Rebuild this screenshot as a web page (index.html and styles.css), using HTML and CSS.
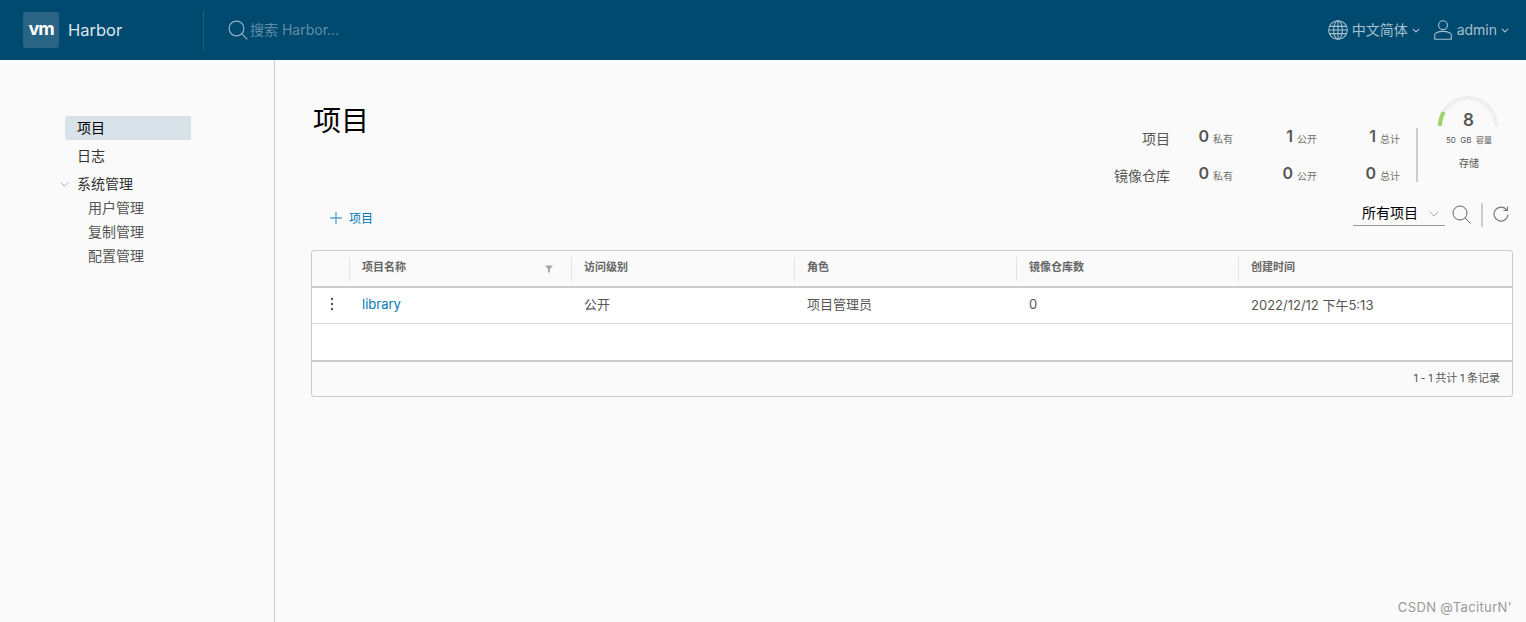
FILE: index.html
```html
<!DOCTYPE html>
<html lang="zh-CN">
<head>
    <meta charset="UTF-8">
    <title>Harbor</title>
    <link rel="stylesheet" href="styles.css">
</head>
<body>
<header class="topbar">
    <div class="brand">
        <span class="brand-logo">vm</span>
        <span class="brand-name">Harbor</span>
    </div>
    <div class="global-search">
        <svg class="search-icon" viewBox="0 0 20 20" width="20" height="20">
            <circle cx="8.5" cy="8.5" r="7.4"/>
            <path d="M13.9 13.9l5.4 5.4"/>
        </svg>
        <span class="search-hint">搜索 Harbor...</span>
    </div>
    <div class="topbar-right">
        <div class="top-menu lang-menu">
            <svg class="top-icon" viewBox="0 0 20 20" width="20" height="20">
                <circle cx="10" cy="10" r="9.3"/>
                <ellipse cx="10" cy="10" rx="4.4" ry="9.3"/>
                <path d="M10 .7v18.6M1.6 6.4h16.8M.7 10h18.6M1.6 13.6h16.8"/>
            </svg>
            <span class="top-label">中文简体</span>
            <svg class="caret" viewBox="0 0 8 5" width="8" height="5"><path d="M.8.8L4 4l3.2-3.2"/></svg>
        </div>
        <div class="top-menu user-menu">
            <svg class="top-icon" viewBox="0 0 18 20" width="18" height="20">
                <circle cx="9" cy="5.2" r="4.4"/>
                <path d="M.7 19.3v-4c0-1.2.6-2.1 1.7-2.6 2-.9 4.2-1.3 6.6-1.3s4.600.4 6.600 1.300c1.100.5 1.700 1.400 1.700 2.600v4z"/>
            </svg>
            <span class="top-label">admin</span>
            <svg class="caret" viewBox="0 0 8 5" width="8" height="5"><path d="M.8.8L4 4l3.2-3.2"/></svg>
        </div>
    </div>
</header>

<div class="layout">
    <nav class="sidenav">
        <a class="nav-item active">项目</a>
        <a class="nav-item logs">日志</a>
        <a class="nav-item group">
            <svg class="group-caret" viewBox="0 0 10 6" width="9" height="5"><path d="M.6.6L5 5 9.400.6"/></svg>
            系统管理
        </a>
        <a class="nav-child">用户管理</a>
        <a class="nav-child">复制管理</a>
        <a class="nav-child">配置管理</a>
    </nav>

    <main class="content">
        <div class="page-head">
            <h1 class="page-title">项目</h1>
            <div class="summary">
                <div class="stats">
                    <div class="stat-name">项目</div>
                    <div class="stat"><b>0</b><small>私有</small></div>
                    <div class="stat"><b>1</b><small>公开</small></div>
                    <div class="stat"><b>1</b><small>总计</small></div>
                    <div class="stat-name">镜像仓库</div>
                    <div class="stat"><b>0</b><small>私有</small></div>
                    <div class="stat"><b>0</b><small>公开</small></div>
                    <div class="stat"><b>0</b><small>总计</small></div>
                </div>
                <div class="storage">
                    <div class="gauge">
                        <svg viewBox="0 0 60 30" width="60" height="30">
                            <path class="gauge-track" d="M2 30a28 28 0 0 1 56 0"/>
                            <path class="gauge-fill" d="M2 30a28 28 0 0 1 3.800-14"/>
                        </svg>
                        <span class="gauge-value">8</span>
                    </div>
                    <div class="storage-cap">50&nbsp; GB &nbsp;容量</div>
                    <div class="storage-name">存储</div>
                </div>
            </div>
        </div>

        <div class="toolbar">
            <button class="add-btn">
                <svg viewBox="0 0 12 12" width="12" height="12"><path d="M6 0v12M0 6h12"/></svg>
                <span class="add-label">项目</span>
            </button>
            <div class="tools">
                <div class="filter-select">
                    <span class="select-label">所有项目</span>
                    <svg viewBox="0 0 10 6" width="10" height="6"><path d="M.6.6L5 5 9.400.6"/></svg>
                </div>
                <svg class="tool-search" viewBox="0 0 19 19" width="19" height="19">
                    <circle cx="8" cy="8" r="7"/>
                    <path d="M13 13l5.400 5.400"/>
                </svg>
                <span class="tool-sep"></span>
                <svg class="tool-refresh" viewBox="0 0 16 16" width="16" height="16">
                    <path d="M13.700 4A7 7 0 1 0 15 8.500"/>
                    <path d="M14.500 .5v4h-4"/>
                </svg>
            </div>
        </div>

        <div class="datagrid">
            <div class="grid-row grid-head">
                <div class="cell action-cell"></div>
                <div class="cell filter-cell">项目名称
                    <svg viewBox="0 0 10 9" width="8" height="8"><path d="M0 0h10L6.200 4.500V9H3.800V4.500z"/></svg>
                </div>
                <div class="cell">访问级别</div>
                <div class="cell">角色</div>
                <div class="cell">镜像仓库数</div>
                <div class="cell">创建时间</div>
            </div>
            <div class="grid-row grid-body">
                <div class="cell action-cell">
                    <svg viewBox="0 0 4 14" width="4" height="14"><circle cx="2" cy="2" r="1.200"/><circle cx="2" cy="7" r="1.200"/><circle cx="2" cy="12" r="1.200"/></svg>
                </div>
                <div class="cell"><a class="project-link">library</a></div>
                <div class="cell cjk">公开</div>
                <div class="cell cjk">项目管理员</div>
                <div class="cell">0</div>
                <div class="cell">2022/12/12 下午5:13</div>
            </div>
            <div class="grid-empty"></div>
            <div class="grid-foot">1 - 1 共计 1 条记录</div>
        </div>
    </main>
</div>
<div class="watermark">CSDN @TaciturN'</div>
</body>
</html>
```

FILE: styles.css
```css
*{
    margin: 0;
    padding: 0;
    box-sizing: border-box;
}
html,body{
    height: 100%;
    overflow: hidden;
}
body{
    background: #fafafa;
    color: #565656;
    font-family: "Inter", "Noto Sans CJK SC", sans-serif;
    font-size: 13px;
}
svg{
    display: block;
    fill: none;
    stroke: currentColor;
    flex: none;
}

/* top bar */
.topbar{
    height: 60px;
    background: #004a70;
    display: flex;
    align-items: center;
    color: #fff;
}
.brand{
    width: 204px;
    height: 40px;
    padding-left: 23px;
    display: flex;
    align-items: center;
    border-right: 1px solid #1d5f81;
}
.brand-logo{
    width: 36px;
    height: 36px;
    border-radius: 3px;
    background: #2a6484;
    color: #fff;
    font-size: 18px;
    font-weight: 700;
    letter-spacing: -1px;
    line-height: 33px;
    text-align: center;
}
.brand-name{
    margin-left: 9px;
    font-size: 16.500px;
    color: #dce7ed;
}
.global-search{
    display: flex;
    align-items: center;
    margin-left: 24px;
    color: #8fb0c2;
}
.search-icon{
    stroke-width: 1.200;
}
.search-hint{
    margin-left: 2px;
    padding-bottom: 2px;
    font-size: 14px;
    color: #5f8ea7;
}
.topbar-right{
    margin-left: auto;
    display: flex;
    align-items: center;
    padding-right: 17px;
}
.top-menu{
    display: flex;
    align-items: center;
    font-size: 14px;
    color: #a5c0ce;
}
.top-label{
    padding-bottom: 2px;
}
.user-menu{
    margin-left: 14px;
}
.top-icon{
    stroke-width: 1.100;
    margin-right: 4px;
}
.user-menu .top-icon{
    margin-right: 5px;
}
.caret{
    margin-left: 4px;
    stroke-width: 1.100;
}

/* side nav */
.layout{
    display: flex;
    height: 562px;
}
.sidenav{
    width: 275px;
    flex: none;
    border-right: 1px solid #ccc;
    padding: 56px 0 0 65px;
    display: flex;
    flex-direction: column;
    font-size: 14px;
    color: #333;
}
.nav-item{
    position: relative;
    width: 126px;
    height: 24px;
    line-height: 23px;
    padding-left: 12px;
    border-radius: 3px 0 0 3px;
}
.nav-item.active{
    background: #d8e3e9;
    color: #000;
}
.logs{
    margin-top: 4px;
}
.group{
    margin-top: 4px;
}
.group-caret{
    position: absolute;
    left: -5px;
    top: 10px;
    color: #999;
}
.nav-child{
    height: 24px;
    line-height: 23px;
    padding-left: 23px;
    color: #565656;
}

/* main */
.content{
    flex: 1;
    min-width: 0;
    padding: 36px 13px 0 36px;
}
.page-head{
    height: 106px;
    display: flex;
    justify-content: space-between;
    align-items: flex-start;
}
.page-title{
    margin: 6px 0 0 2px;
    font-size: 28px;
    font-weight: 400;
    line-height: 38px;
    color: #000;
}
.summary{
    display: flex;
    align-items: flex-start;
}
.stats{
    display: grid;
    grid-template-columns: 70px 63px 84px 83px;
    grid-auto-rows: 37px;
    margin-top: 24px;
    width: 316px;
    padding-right: 16px;
    align-items: center;
}
.stat-name{
    padding-bottom: 2px;
    text-align: right;
    font-size: 14px;
    color: #565656;
    white-space: nowrap;
}
.stat{
    display: flex;
    justify-content: flex-end;
    align-items: baseline;
    padding-bottom: 4px;
}
.stat b{
    font-size: 16px;
    font-weight: 600;
    margin-right: 4px;
    position: relative;
    top: -1px;
}
.stat small{
    font-size: 10px;
    color: #727272;
}
.storage{
    position: relative;
    width: 97px;
    padding: 0 13px 0 22px;
    text-align: center;
}
.storage::before{
    content: "";
    position: absolute;
    left: 0;
    top: 32px;
    width: 2px;
    height: 54px;
    background: #ccc;
}
.gauge{
    position: relative;
    height: 30px;
}
.gauge-track,.gauge-fill{
    stroke-width: 4;
}
.gauge-track{
    stroke: #eee;
}
.gauge-fill{
    stroke: #9bd46c;
}
.gauge-value{
    position: absolute;
    left: 0;
    right: 1px;
    top: 13px;
    font-size: 17px;
    line-height: 22px;
    font-weight: 600;
}
.storage-cap{
    margin: 7px -10px 0;
    font-size: 8px;
    line-height: 14px;
    white-space: nowrap;
}
.storage-name{
    margin-top: 9px;
    font-size: 10px;
    line-height: 14px;
}

/* toolbar */
.toolbar{
    height: 32px;
    margin-bottom: 16px;
    display: flex;
    justify-content: space-between;
    align-items: center;
}
.add-btn{
    display: flex;
    align-items: center;
    margin: 0 0 0 19px;
    border: 0;
    background: none;
    color: #0079b8;
    font-family: inherit;
    font-size: 12px;
}
.add-btn svg{
    margin-right: 7px;
    color: #55a6d0;
    stroke-width: 1.300;
}
.add-label{
    padding-bottom: 2px;
}
.tools{
    align-self: flex-start;
    display: flex;
    align-items: flex-start;
    padding-right: 4px;
}
.filter-select{
    width: 92px;
    height: 24px;
    padding-left: 9px;
    display: flex;
    align-items: center;
    justify-content: space-between;
    padding-right: 6px;
    border-bottom: 1px solid #9a9a9a;
    font-size: 14px;
    color: #000;
}
.select-label{
    padding-bottom: 4px;
}
.filter-select svg{
    color: #aaa;
}
.tool-search{
    margin: 3px 0 0 7px;
    color: #666;
}
.tool-sep{
    width: 2px;
    height: 24px;
    margin: 1px 10px 0 10px;
    background: #ccc;
}
.tool-refresh{
    margin-top: 4px;
    color: #777;
    stroke-width: 1.100;
}

/* datagrid */
.datagrid{
    border: 1px solid #ccc;
    border-radius: 3px;
    background: #fafafa;
    overflow: hidden;
}
.grid-row{
    display: grid;
    grid-template-columns: 37px 222px 223px 222px 222px 1fr;
}
.grid-head{
    height: 37px;
    border-bottom: 2px solid #ccc;
    align-items: center;
    font-size: 11px;
    font-weight: 600;
    color: #666;
}
.grid-head .cell{
    padding-bottom: 5px;
}
.grid-head .cell + .cell{
    border-left: 1px solid #e3e3e3;
}
.cell{
    padding: 0 0 3px 12px;
    height: 24px;
    display: flex;
    align-items: center;
}
.filter-cell{
    justify-content: space-between;
    padding-right: 18px;
}
.filter-cell svg{
    margin-top: 6px;
    fill: #a5a5a5;
    stroke: none;
}
.grid-body{
    height: 36px;
    background: #fff;
    border-bottom: 1px solid #ddd;
    align-items: center;
    color: #565656;
}
.grid-body .cell{
    padding-left: 13px;
}
.grid-body .cjk{
    padding-bottom: 5px;
}
.grid-body .action-cell{
    padding-left: 18px;
    color: #565656;
}
.action-cell svg{
    fill: currentColor;
    stroke: none;
}
.project-link{
    color: #0079b8;
}
.grid-empty{
    height: 38px;
    background: #fff;
    border-bottom: 2px solid #ccc;
}
.grid-foot{
    height: 34px;
    line-height: 33px;
    text-align: right;
    padding-right: 12px;
    font-size: 11px;
    word-spacing: -.5px;
    color: #565656;
}
.watermark{
    position: absolute;
    right: 14px;
    bottom: 7px;
    font-size: 13px;
    color: #999;
    letter-spacing: .35px;
}
```
